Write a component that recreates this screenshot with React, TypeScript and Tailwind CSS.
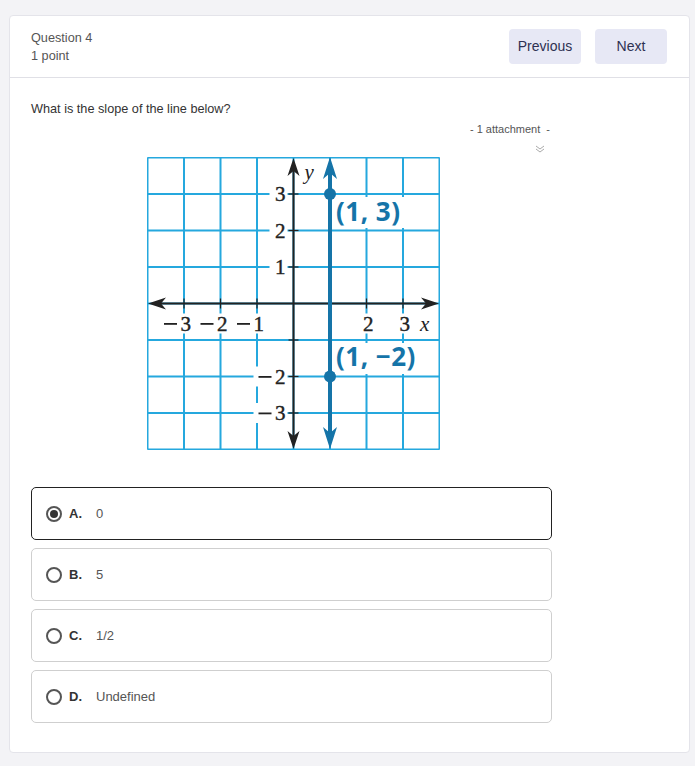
import React from "react";

const S = 36.5;
const gx = (i: number) => 0.5 + i * S; // grid line i from 0..8
const BLUE_GRID = "#25a8de";
const BLUE = "#1574a8";

function Graph() {
  const lines = [];
  for (let i = 0; i <= 8; i++) {
    lines.push(<line key={"v" + i} x1={gx(i)} y1={0.5} x2={gx(i)} y2={292.5} stroke={BLUE_GRID} strokeWidth={2} />);
    lines.push(<line key={"h" + i} x1={0.5} y1={gx(i)} x2={292.5} y2={gx(i)} stroke={BLUE_GRID} strokeWidth={2} />);
  }
  const cx = gx(4);
  const cy = gx(4);
  const serif = { fontFamily: "'Liberation Serif', 'DejaVu Serif', serif" };
  const lab = (x: number, y: number, t: string, neg: boolean, key: string) => {
    const w = neg ? 32 : 16;
    return (
      <g key={key}>
        <rect x={x - w} y={y - 10} width={w + 2} height={20} fill="white" />
        <text x={x} y={y + 7} textAnchor="end" fontSize={21} fill="#222" stroke="#222" strokeWidth={0.4} style={serif}>{t}</text>
        {neg && <rect x={x - 27} y={y - 0.5} width={13} height={1.8} fill="#222" />}
      </g>
    );
  };
  const lx = cx + S;
  const sans = { fontFamily: "'Open Sans', 'Noto Sans', sans-serif" };
  return (
    <svg width={293} height={293} viewBox="0 0 293 293" className="block">
      <rect x={0} y={0} width={293} height={293} fill="white" />
      {lines}
      {/* x-axis labels */}
      {[
        { x: gx(1) + 7, t: "3", n: true },
        { x: gx(2) + 7, t: "2", n: true },
        { x: gx(3) + 7, t: "1", n: true },
        { x: gx(6) + 7, t: "2", n: false },
        { x: gx(7) + 7, t: "3", n: false },
      ].map((l, i) => lab(l.x, cy + 20, l.t, l.n, "x" + i))}
      <rect x={272} y={cy + 10} width={16} height={20} fill="white" />
      <text x={273} y={cy + 27} fontSize={21} fontStyle="italic" fill="#222" style={serif}>x</text>
      {/* y-axis labels */}
      {[
        { y: gx(1), t: "3", n: false },
        { y: gx(2), t: "2", n: false },
        { y: gx(3), t: "1", n: false },
        { y: gx(6), t: "2", n: true },
        { y: gx(7), t: "3", n: true },
      ].map((l, i) => lab(cx - 8, l.y, l.t, l.n, "y" + i))}
      <rect x={cx + 8} y={4} width={16} height={24} fill="white" />
      <text x={cx + 11} y={22} fontSize={21} fontStyle="italic" fill="#222" style={serif}>y</text>
      {/* ticks */}
      {[1, 2, 3, 5, 6, 7].map((i) => (
        <line key={"tx" + i} x1={gx(i)} y1={cy - 5} x2={gx(i)} y2={cy + 5} stroke="#222" strokeWidth={1.2} />
      ))}
      {[1, 2, 3, 5, 6, 7].map((i) => (
        <line key={"ty" + i} x1={cx - 5} y1={gx(i)} x2={cx + 5} y2={gx(i)} stroke="#222" strokeWidth={1.2} />
      ))}
      {/* axes */}
      <line x1={8} y1={cy} x2={285} y2={cy} stroke="#222" strokeWidth={2} />
      <line x1={cx} y1={8} x2={cx} y2={285} stroke="#222" strokeWidth={2} />
      <path d={`M1 ${cy} L19 ${cy - 6} L14 ${cy} L19 ${cy + 6} Z`} fill="#222" />
      <path d={`M292 ${cy} L274 ${cy - 6} L279 ${cy} L274 ${cy + 6} Z`} fill="#222" />
      <path d={`M${cx} 1 L${cx - 6} 19 L${cx} 14 L${cx + 6} 19 Z`} fill="#222" />
      <path d={`M${cx} 292 L${cx - 6} 274 L${cx} 279 L${cx + 6} 274 Z`} fill="#222" />
      {/* vertical blue line */}
      <line x1={lx} y1={10} x2={lx} y2={282} stroke={BLUE} strokeWidth={4} />
      <path d={`M${lx} 0 L${lx - 7} 22 L${lx} 16 L${lx + 7} 22 Z`} fill={BLUE} />
      <path d={`M${lx} 292 L${lx - 7} 270 L${lx} 276 L${lx + 7} 270 Z`} fill={BLUE} />
      <circle cx={lx} cy={gx(1)} r={6} fill={BLUE} />
      <circle cx={lx} cy={gx(6)} r={6} fill={BLUE} />
      {/* point labels */}
      <rect x={lx + 5} y={gx(1) + 3} width={70} height={31} fill="white" />
      <text x={lx + 6} y={gx(1) + 27} fontSize={26} fontWeight={700} letterSpacing={0.5} fill={BLUE} style={sans}>(1, 3)</text>
      <rect x={lx + 5} y={gx(5) + 3} width={96} height={31} fill="white" />
      <text x={lx + 6} y={gx(5) + 26} fontSize={26} fontWeight={700} letterSpacing={0.5} fill={BLUE} style={sans}>(1,  {"\u2212"}2)</text>
    </svg>
  );
}

function Radio({ checked }: { checked: boolean }) {
  return (
    <span className="flex h-[16px] w-[16px] items-center justify-center rounded-full border-2 border-[#555555] bg-white">
      {checked && <span className="h-[8px] w-[8px] rounded-full bg-[#333333]" />}
    </span>
  );
}

const options = [
  { k: "A.", v: "0", c: true },
  { k: "B.", v: "5", c: false },
  { k: "C.", v: "1/2", c: false },
  { k: "D.", v: "Undefined", c: false },
];

export default function App() {
  return (
    <div className="min-h-[766px] bg-[#f3f3f6] pt-[15px] pl-[9px] pr-[5px] pb-[14px]" style={{ fontFamily: "'Liberation Sans', Arial, sans-serif" }}>
      <div className="rounded-[4px] border border-[#e4e4ea] bg-white">
        <div className="flex h-[62px] items-center justify-between border-b border-[#e0e0e6] pl-[21px] pr-[22px]">
          <div className="text-[12.7px] leading-[18px] text-[#555555]">
            <div>Question 4</div>
            <div>1 point</div>
          </div>
          <div className="flex gap-[14px]">
            <button className="h-[35px] w-[72px] rounded-[4px] bg-[#e7e8f5] text-[14px] text-[#2e3152]">Previous</button>
            <button className="h-[35px] w-[72px] rounded-[4px] bg-[#e7e8f5] text-[14px] text-[#2e3152]">Next</button>
          </div>
        </div>
        <div className="pl-[21px] pt-[22px] pb-[29px]">
          <div className="w-[521px]">
            <div className="text-[12.7px] leading-[18px] text-[#333333]">What is the slope of the line below?</div>
            <div className="mt-[4px] flex flex-col items-end pr-[2px]">
              <div className="text-[11px] leading-[14px] text-[#555555]">- 1 attachment &nbsp;-</div>
              <svg width="12" height="10" viewBox="0 0 12 10" className="mr-[4px] mt-[8px]">
                <polyline points="2,2 6,5 10,2" fill="none" stroke="#aaaaaa" strokeWidth="1" />
                <polyline points="2,5 6,8 10,5" fill="none" stroke="#aaaaaa" strokeWidth="1" />
              </svg>
            </div>
            <div className="mt-[3px] flex justify-center pl-[3px]">
              <Graph />
            </div>
            <div className="mt-[37px] flex flex-col gap-[8px]">
              {options.map((o) => (
                <div
                  key={o.k}
                  className={
                    o.c
                      ? "flex h-[53px] items-center rounded-[5px] border border-[#222222] pl-[14px]"
                      : "flex h-[53px] items-center rounded-[5px] border border-[#cfcfcf] pl-[14px]"
                  }
                >
                  <Radio checked={o.c} />
                  <span className="ml-[7px] w-[27px] text-[13px] font-semibold text-[#333333]">{o.k}</span>
                  <span className="text-[13px] text-[#555555]">{o.v}</span>
                </div>
              ))}
            </div>
          </div>
        </div>
      </div>
    </div>
  );
}
